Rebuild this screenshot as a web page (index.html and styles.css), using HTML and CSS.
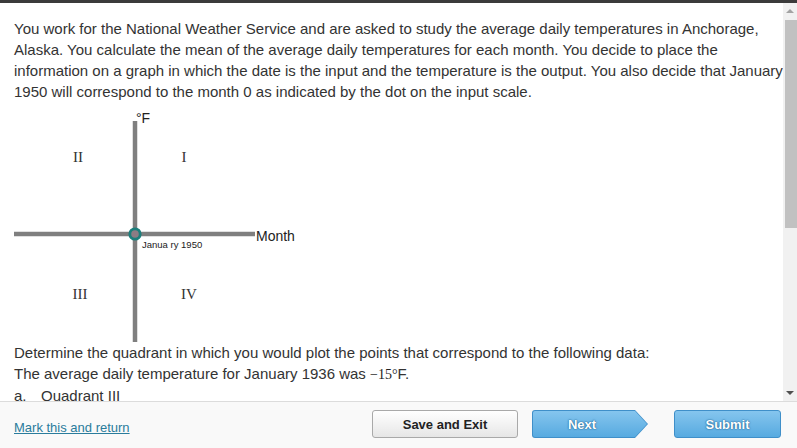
FILE: index.html
```html
<!DOCTYPE html>
<html>
<head>
<meta charset="utf-8">
<link rel="stylesheet" href="styles.css">
</head>
<body>
<div class="topbar"></div>
<div class="main">
  <div class="content">
    <p class="intro">You work for the National Weather Service and are asked to study the average daily temperatures in Anchorage, Alaska. You calculate the mean of the average daily temperatures for each month. You decide to place the information on a graph in which the date is the input and the temperature is the output. You also decide that January 1950 will correspond to the month 0 as indicated by the dot on the input scale.</p>
    <svg class="graph" width="300" height="233" viewBox="0 0 300 233">
      <line x1="0" y1="125" x2="241" y2="125" stroke="#7f7f7f" stroke-width="4.5"/>
      <line x1="121" y1="12" x2="121" y2="233" stroke="#7f7f7f" stroke-width="4.5"/>
      <circle cx="121" cy="125" r="5.2" fill="#8c7c84" stroke="#1d7f7c" stroke-width="2.8"/>
      <text x="122" y="14" class="axis">°F</text>
      <text x="242" y="132" class="axis">Month</text>
      <text x="64" y="53" class="roman">II</text>
      <text x="170" y="53" class="roman">I</text>
      <text x="66" y="190" class="roman">III</text>
      <text x="175" y="190" class="roman">IV</text>
      <text x="128" y="139" class="small">Janua ry 1950</text>
    </svg>
    <p class="q">Determine the quadrant in which you would plot the points that correspond to the following data:</p>
    <p class="q">The average daily temperature for January 1936 was <span class="math">−15°</span>F.</p>
    <p class="q"><span class="letter">a.</span>Quadrant III</p>
  </div>
  <div class="scrollbar">
    <div class="arrow up"></div>
    <div class="thumb"></div>
    <div class="spacer"></div>
    <div class="arrow down"></div>
  </div>
</div>
<div class="footer">
  <a class="mark" href="#">Mark this and return</a>
  <div class="buttons">
    <div class="btn save">Save and Exit</div>
    <div class="next"><div class="next-inner">Next</div></div>
    <div class="btn submit">Submit</div>
  </div>
</div>
</body>
</html>
```
FILE: styles.css
```css
html, body {
  margin: 0;
  padding: 0;
  background: #fff;
  width: 797px;
  height: 448px;
  overflow: hidden;
  font-family: "Liberation Sans", Arial, sans-serif;
  color: #333;
}
.topbar {
  height: 3px;
  background: #3b3b3b;
}
.main {
  display: flex;
  height: 398px;
}
.content {
  flex: 1;
  padding: 15px 0 0 14px;
  overflow: hidden;
}
.intro, .q {
  margin: 0;
  font-size: 15px;
  line-height: 21px;
}
.graph {
  display: block;
  margin-top: 7px;
}
.axis {
  font-family: "Liberation Sans", Arial, sans-serif;
  font-size: 14px;
  fill: #222;
}
.roman {
  font-family: "Liberation Serif", "Times New Roman", serif;
  font-size: 15px;
  text-anchor: middle;
  fill: #333;
}
.small {
  font-family: "Liberation Sans", Arial, sans-serif;
  font-size: 9.5px;
  fill: #222;
}
.math {
  font-family: "Liberation Serif", "Times New Roman", serif;
  font-size: 14px;
  color: #222;
}
.letter {
  display: inline-block;
  width: 27px;
}
.scrollbar {
  width: 14px;
  background: #f1f1f1;
  display: flex;
  flex-direction: column;
  align-items: center;
}
.arrow {
  width: 0;
  height: 0;
  border-left: 4px solid transparent;
  border-right: 4px solid transparent;
}
.arrow.up {
  border-bottom: 4px solid #a3a3a3;
  margin-top: 6px;
}
.arrow.down {
  border-top: 4px solid #505050;
  margin-bottom: 6px;
}
.thumb {
  width: 12px;
  height: 208px;
  margin-top: 7px;
  margin-left: 2px;
  background: #c1c1c1;
}
.spacer {
  flex: 1;
}
.footer {
  height: 46px;
  border-top: 1px solid #dcdcdc;
  background: #f9f9f9;
  display: flex;
  align-items: center;
  padding: 0 16px 0 14px;
}
.mark {
  font-size: 13px;
  color: #2a7c9c;
  text-decoration: underline;
  margin-top: 4px;
}
.buttons {
  margin-left: auto;
  display: flex;
  align-items: center;
  margin-top: -2px;
}
.btn {
  box-sizing: border-box;
  height: 28px;
  border-radius: 3px;
  display: flex;
  align-items: center;
  justify-content: center;
  font-size: 13px;
  font-weight: bold;
}
.save {
  width: 146px;
  border: 1px solid #a9a9a9;
  background: linear-gradient(#ffffff, #e6e6e6);
  color: #222;
  margin-right: 14px;
}
.next {
  width: 116px;
  height: 28px;
  background: #3f8fc9;
  clip-path: polygon(0 0, calc(100% - 13px) 0, 100% 50%, calc(100% - 13px) 100%, 0 100%);
  margin-right: 26px;
  border-radius: 3px 0 0 3px;
}
.next-inner {
  margin: 1px;
  height: 26px;
  width: 114px;
  background: linear-gradient(#85c5ee, #57aae0);
  clip-path: polygon(0 0, calc(100% - 12px) 0, 100% 50%, calc(100% - 12px) 100%, 0 100%);
  display: flex;
  align-items: center;
  justify-content: center;
  padding-right: 16px;
  box-sizing: border-box;
  color: #fff;
  font-size: 13px;
  font-weight: bold;
  text-shadow: 0 0 2px #1f6394, 0 0 1px #1f6394;
  border-radius: 2px 0 0 2px;
}
.submit {
  width: 107px;
  border: 1px solid #3f8fc9;
  background: linear-gradient(#85c5ee, #57aae0);
  color: #fff;
  text-shadow: 0 0 2px #1f6394, 0 0 1px #1f6394;
}
```
